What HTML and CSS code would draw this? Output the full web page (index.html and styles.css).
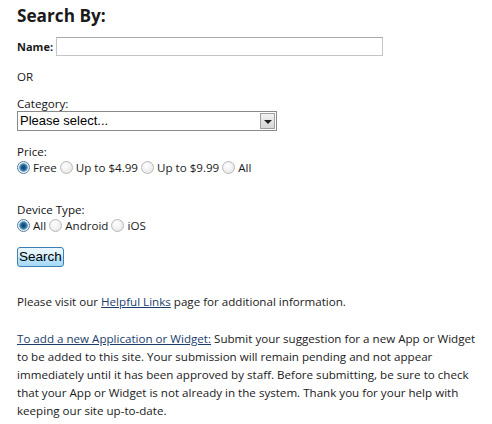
FILE: index.html
```html
<!DOCTYPE html>
<html>
<head>
<meta charset="utf-8">
<link rel="stylesheet" href="styles.css">
</head>
<body>
<div class="page">
  <h2 class="title">Search By:</h2>
  <div class="row-name">
    <label class="lbl-bold">Name:</label>
    <span class="textbox"></span>
  </div>
  <div class="or">OR</div>
  <div class="field">
    <div class="lbl">Category:</div>
    <div class="select">
      <span class="select-text">Please select...</span>
      <span class="select-btn"><span class="arrow"></span></span>
    </div>
  </div>
  <div class="field price">
    <div class="lbl">Price:</div>
    <div class="radios">
      <span class="radio checked"></span><span class="rlabel">Free</span>
      <span class="radio"></span><span class="rlabel">Up to $4.99</span>
      <span class="radio"></span><span class="rlabel">Up to $9.99</span>
      <span class="radio"></span><span class="rlabel">All</span>
    </div>
  </div>
  <div class="field device">
    <div class="lbl">Device Type:</div>
    <div class="radios">
      <span class="radio checked"></span><span class="rlabel">All</span>
      <span class="radio"></span><span class="rlabel">Android</span>
      <span class="radio"></span><span class="rlabel">iOS</span>
    </div>
  </div>
  <div class="btn-row"><span class="button">Search</span></div>
  <p class="visit">Please visit our <a class="link" href="#">Helpful Links</a> page for additional information.</p>
  <p class="info"><a class="link" href="#">To add a new Application or Widget:</a> Submit your suggestion for a new App or Widget to be added to this site. Your submission will remain pending and not appear immediately until it has been approved by staff. Before submitting, be sure to check that your App or Widget is not already in the system. Thank you for your help with keeping our site up-to-date.</p>
</div>
</body>
</html>
```
FILE: styles.css
```css
html, body {
  margin: 0;
  padding: 0;
  background: #ffffff;
}
.page {
  padding: 5px 12px 0 17px;
  font-family: "Open Sans", "DejaVu Sans", sans-serif;
  font-size: 11.6px;
  color: #1a1a1a;
}
.title {
  margin: 0;
  font-size: 17.2px;
  font-weight: 700;
  line-height: 21px;
  color: #1a1a1a;
}
.row-name {
  display: flex;
  align-items: center;
  margin-top: 11px;
  height: 19px;
}
.lbl-bold {
  font-weight: 700;
  font-size: 11px;
  margin-right: 3px;
}
.textbox {
  display: block;
  width: 325px;
  height: 17px;
  border: 1px solid #c4c4c4;
  border-top-color: #a9a9a9;
  background: #fff;
}
.or {
  margin-top: 13px;
  line-height: 16px;
}
.field {
  margin-top: 12px;
}
.lbl {
  line-height: 14px;
  color: #111;
}
.select {
  display: flex;
  align-items: stretch;
  width: 258px;
  height: 18px;
  border: 1px solid #8a8a8a;
  background: #fff;
}
.select-text {
  flex: 1;
  font-family: "Liberation Sans", Arial, sans-serif;
  font-size: 13px;
  line-height: 18px;
  padding-left: 2px;
  color: #000;
}
.select-btn {
  width: 15px;
  margin: 1px;
  border: 1px solid #a0a0a0;
  background: linear-gradient(#f2f2f2, #d6d6d6);
  display: flex;
  align-items: center;
  justify-content: center;
  box-sizing: border-box;
}
.arrow {
  width: 0;
  height: 0;
  border-left: 4px solid transparent;
  border-right: 4px solid transparent;
  border-top: 4px solid #222;
  margin-top: 1px;
}
.radios {
  display: flex;
  align-items: center;
  height: 16px;
}
.radio {
  display: block;
  width: 11px;
  height: 11px;
  border-radius: 50%;
  border: 1px solid #b8b8b8;
  background: radial-gradient(circle at 40% 35%, #ffffff, #e2e2e2);
  margin-right: 3px;
  box-sizing: content-box;
}
.radio.checked {
  border-color: #5f7f98;
  background: radial-gradient(circle at 50% 50%, #123f66 0, #24679a 2.5px, #6aa7d0 4px, #e6eef4 4.6px, #f4f4f4 6px);
}
.rlabel {
  margin-right: 3px;
}
.field.price {
  margin-top: 14px;
}
.field.device {
  margin-top: 28px;
}
.btn-row {
  margin-top: 14px;
  height: 22px;
}
.button {
  display: inline-block;
  font-family: "Liberation Sans", Arial, sans-serif;
  font-size: 13.5px;
  line-height: 16px;
  padding: 1px 1px 1px 1px;
  border: 1px solid #3c7fb1;
  border-radius: 3px;
  background: linear-gradient(#eaf6fd 0, #d9f0fc 50%, #bee6fd 51%, #a7d9f5 100%);
  color: #000;
}
.visit {
  margin: 24px 0 0 0;
  line-height: 18px;
}
.info {
  margin: 19px 0 0 0;
  line-height: 18px;
}
.link {
  color: #1a3d6b;
  text-decoration: underline;
}
```
